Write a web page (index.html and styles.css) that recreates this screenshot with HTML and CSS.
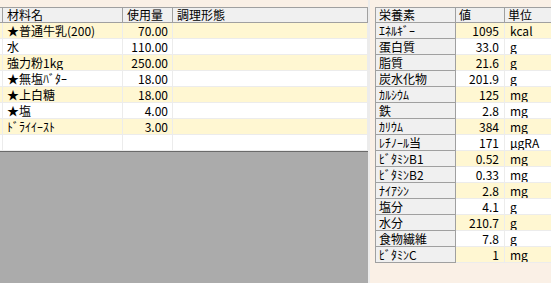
FILE: index.html
```html
<!DOCTYPE html>
<html lang="ja">
<head>
  <meta charset="UTF-8" />
  <title>レシピ</title>
  <link rel="stylesheet" href="styles.css">
</head>
<body>
  <!-- 材料一覧 -->
  <div class="left-panel">
    <div class="recipe-grid">
      <div class="cell head stub"></div>
      <div class="cell head">材料名</div>
      <div class="cell head">使用量</div>
      <div class="cell head">調理形態</div>

      <div class="cell stub odd"></div><div class="cell odd">★普通牛乳(200)</div><div class="cell odd num">70.00</div><div class="cell odd"></div>
      <div class="cell stub"></div><div class="cell">水</div><div class="cell num">110.00</div><div class="cell"></div>
      <div class="cell stub odd"></div><div class="cell odd">強力粉1kg</div><div class="cell odd num">250.00</div><div class="cell odd"></div>
      <div class="cell stub"></div><div class="cell">★無塩ﾊﾞﾀｰ</div><div class="cell num">18.00</div><div class="cell"></div>
      <div class="cell stub odd"></div><div class="cell odd">★上白糖</div><div class="cell odd num">18.00</div><div class="cell odd"></div>
      <div class="cell stub"></div><div class="cell">★塩</div><div class="cell num">4.00</div><div class="cell"></div>
      <div class="cell stub odd"></div><div class="cell odd">ﾄﾞﾗｲｲｰｽﾄ</div><div class="cell odd num">3.00</div><div class="cell odd"></div>
      <div class="cell stub"></div><div class="cell"></div><div class="cell num"></div><div class="cell"></div>
    </div>
    <div class="empty-area"></div>
  </div>

  <!-- 栄養素 -->
  <div class="right-panel">
    <div class="nutrient-grid">
      <div class="cell head name">栄養素</div>
      <div class="cell head">値</div>
      <div class="cell head">単位</div>

      <div class="cell name">ｴﾈﾙｷﾞｰ</div><div class="cell odd num">1095</div><div class="cell odd">kcal</div>
      <div class="cell name">蛋白質</div><div class="cell num">33.0</div><div class="cell">g</div>
      <div class="cell name">脂質</div><div class="cell odd num">21.6</div><div class="cell odd">g</div>
      <div class="cell name">炭水化物</div><div class="cell num">201.9</div><div class="cell">g</div>
      <div class="cell name">ｶﾙｼｳﾑ</div><div class="cell odd num">125</div><div class="cell odd">mg</div>
      <div class="cell name">鉄</div><div class="cell num">2.8</div><div class="cell">mg</div>
      <div class="cell name">ｶﾘｳﾑ</div><div class="cell odd num">384</div><div class="cell odd">mg</div>
      <div class="cell name">ﾚﾁﾉｰﾙ当</div><div class="cell num">171</div><div class="cell">μgRA</div>
      <div class="cell name">ﾋﾞﾀﾐﾝB1</div><div class="cell odd num">0.52</div><div class="cell odd">mg</div>
      <div class="cell name">ﾋﾞﾀﾐﾝB2</div><div class="cell num">0.33</div><div class="cell">mg</div>
      <div class="cell name">ﾅｲｱｼﾝ</div><div class="cell odd num">2.8</div><div class="cell odd">mg</div>
      <div class="cell name">塩分</div><div class="cell num">4.1</div><div class="cell">g</div>
      <div class="cell name">水分</div><div class="cell odd num">210.7</div><div class="cell odd">g</div>
      <div class="cell name">食物繊維</div><div class="cell num">7.8</div><div class="cell">g</div>
      <div class="cell name">ﾋﾞﾀﾐﾝC</div><div class="cell odd num">1</div><div class="cell odd">mg</div>
    </div>
  </div>
</body>
</html>
```

FILE: styles.css
```css
body {
  margin: 0;
  padding: 0;
  width: 551px;
  height: 283px;
  overflow: hidden;
  background: #faf0e6;
  font-family: "Noto Sans CJK JP", "DejaVu Sans", sans-serif;
  font-size: 12px;
  color: #000;
  display: flex;
}

/* ======================
   左：材料一覧
   ====================== */
.left-panel {
  width: 368px;
  border-right: 2px solid #ececec;
  display: flex;
  flex-direction: column;
  padding-top: 7px;
}
.recipe-grid {
  display: grid;
  grid-template-columns: 3px 120px 50px 195px;
  grid-auto-rows: 16px;
  background: #fff;
}
.empty-area {
  flex: 1;
  background: #ababab;
  border-top: 1px solid #6a6a6a;
}

.cell {
  box-sizing: border-box;
  height: 16px;
  line-height: 15px;
  padding: 0 4px;
  white-space: nowrap;
  overflow: hidden;
  border-right: 1px solid #ececec;
  border-bottom: 1px solid #ececec;
  background: #fff;
}
.cell.odd {
  background: #fff7d2;
}
.cell.num {
  text-align: right;
}
.cell.stub {
  padding: 0;
}
.cell.head {
  background: #f0f0f0;
  border-top: 1px solid #a0a0a0;
  border-bottom: 1px solid #a0a0a0;
  border-right-color: #a0a0a0;
  line-height: 14px;
}

/* ======================
   右：栄養素
   ====================== */
.right-panel {
  flex: 1;
  padding: 7px 0 0 5px;
}
.nutrient-grid {
  display: grid;
  grid-template-columns: 80px 49px 60px;
  grid-auto-rows: 16px;
  border-left: 1px solid #a0a0a0;
}
.nutrient-grid .cell {
  padding: 0 5px;
}
.nutrient-grid .cell.name {
  background: #f0f0f0;
  border-right-color: #a0a0a0;
  border-bottom-color: #a0a0a0;
  padding: 0 3px;
}
.nutrient-grid .cell.head {
  padding: 0 3px;
}
```
